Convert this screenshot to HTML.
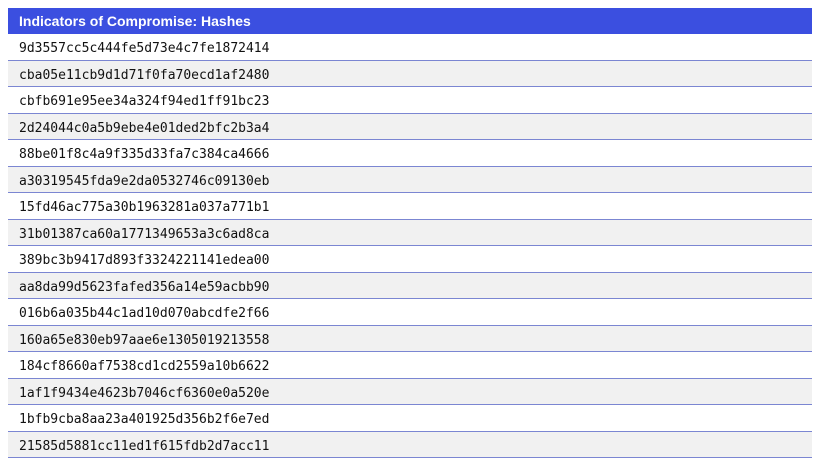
<!DOCTYPE html>
<html><head><style>
body{margin:0;background:#fff;width:820px;height:466px;overflow:hidden}
.t{position:absolute;left:8px;top:8px;width:804px}
.h{height:26px;background:#3b4fe0;color:#fff;font:bold 14px "Liberation Sans",sans-serif;line-height:27px;padding-left:11px;box-sizing:border-box}
.r{height:26.5px;box-sizing:border-box;border-bottom:1.5px solid #7b86d2;font:13px "DejaVu Sans Mono",monospace;color:#111;line-height:26px;padding:2px 0 0 11px}
.r:nth-child(odd){background:#f1f1f1}
</style></head><body><div class="t">
<div class="h">Indicators of Compromise: Hashes</div>
<div class="r">9d3557cc5c444fe5d73e4c7fe1872414</div>
<div class="r">cba05e11cb9d1d71f0fa70ecd1af2480</div>
<div class="r">cbfb691e95ee34a324f94ed1ff91bc23</div>
<div class="r">2d24044c0a5b9ebe4e01ded2bfc2b3a4</div>
<div class="r">88be01f8c4a9f335d33fa7c384ca4666</div>
<div class="r">a30319545fda9e2da0532746c09130eb</div>
<div class="r">15fd46ac775a30b1963281a037a771b1</div>
<div class="r">31b01387ca60a1771349653a3c6ad8ca</div>
<div class="r">389bc3b9417d893f3324221141edea00</div>
<div class="r">aa8da99d5623fafed356a14e59acbb90</div>
<div class="r">016b6a035b44c1ad10d070abcdfe2f66</div>
<div class="r">160a65e830eb97aae6e1305019213558</div>
<div class="r">184cf8660af7538cd1cd2559a10b6622</div>
<div class="r">1af1f9434e4623b7046cf6360e0a520e</div>
<div class="r">1bfb9cba8aa23a401925d356b2f6e7ed</div>
<div class="r">21585d5881cc11ed1f615fdb2d7acc11</div>
</div></body></html>
